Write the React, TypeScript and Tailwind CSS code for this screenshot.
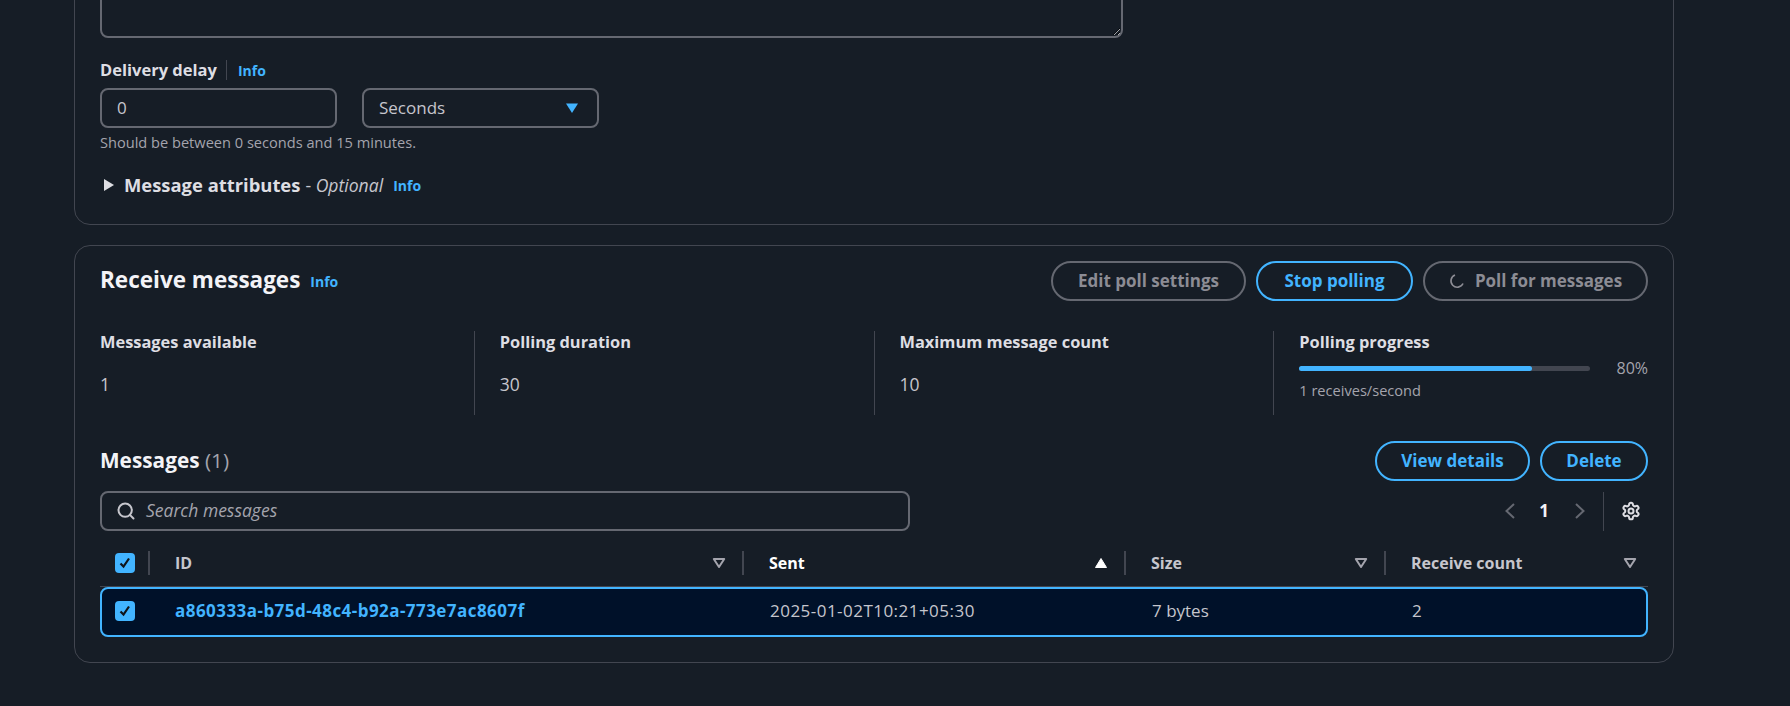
import { Search } from "lucide-react";

const Info = ({ className = "" }: { className?: string }) => (
  <span className={`text-[14px] leading-4 font-bold text-[#42b4ff] ${className}`}>Info</span>
);

const SortDown = () => (
  <svg width="14" height="12" viewBox="0 0 14 12" className="shrink-0">
    <path d="M1.8 2h10.4L7 10z" fill="none" stroke="#a4a4ad" strokeWidth="2" strokeLinejoin="round" />
  </svg>
);

const SortUp = () => (
  <svg width="14" height="12" viewBox="0 0 14 12" className="shrink-0">
    <path d="M1.5 10.5h11L7 1.5z" fill="#ffffff" stroke="#ffffff" strokeWidth="1" strokeLinejoin="round" />
  </svg>
);

const Check = () => (
  <span className="flex h-[20px] w-[20px] items-center justify-center rounded-[4px] bg-[#42b4ff]">
    <svg width="14" height="14" viewBox="0 0 14 14">
      <path d="M2.5 7.5 5.5 10.5 11 2.5" fill="none" stroke="#0f141a" strokeWidth="2.2" />
    </svg>
  </span>
);

const Stat = ({ label, value }: { label: string; value: string }) => (
  <div className="mr-[25px] h-[84px] w-[375px] border-r border-[#424650]">
    <div className="mt-[1px] text-[16.4px] leading-5 font-bold text-[#dedee3]">{label}</div>
    <div className="mt-[22px] text-[17.5px] leading-5 text-[#c6c6cd]">{value}</div>
  </div>
);

const Pill = ({ children, tone, className }: { children: React.ReactNode; tone: "blue" | "off"; className: string }) => (
  <span
    className={`flex h-[40px] items-center justify-center rounded-[20px] border-2 text-[17px] font-bold ${
      tone === "blue" ? "border-[#42b4ff] text-[#42b4ff]" : "border-[#656871] text-[#8c8c94]"
    } ${className}`}
  >
    {children}
  </span>
);

const Head = ({ label, width, strong, up, noRule, pr = "pr-[15px]" }: { label: string; width: string; strong?: boolean; up?: boolean; noRule?: boolean; pr?: string }) => (
  <div className={`flex h-[24px] items-center ${width} pl-[25px] ${pr} ${noRule ? "" : "border-r-2 border-[#424650]"}`}>
    <span className={`flex-1 text-[16px] font-bold ${strong ? "text-white" : "text-[#c6c6cd]"}`}>{label}</span>
    {up ? <SortUp /> : <SortDown />}
  </div>
);

export default function App() {
  return (
    <div
      className="h-[706px] w-[1790px] overflow-hidden bg-[#161d26] px-[74px]"
      style={{ fontFamily: '"Open Sans", "Noto Sans", sans-serif' }}
    >
      <div className="-mt-[60px] flex w-[1600px] flex-col gap-[20px]">
        <section className="h-[285px] rounded-[16px] border border-[#424650] px-[25px] pt-[5px]">
          <textarea
            readOnly
            className="block h-[92px] w-[1023px] resize-y rounded-[8px] border-2 border-[#656871] bg-transparent"
          />
          <div className="mt-[20px] flex h-[24px] items-center">
            <span className="text-[16.5px] font-bold text-[#dedee3]">Delivery delay</span>
            <span className="ml-[9px] mr-[11px] h-[20px] w-px bg-[#424650]" />
            <Info className="mt-[2px]" />
          </div>
          <div className="mt-[6px] flex gap-[25px]">
            <div className="flex h-[40px] w-[237px] items-center rounded-[8px] border-2 border-[#656871] pl-[15px] text-[17px] text-[#c6c6cd]">
              0
            </div>
            <div className="flex h-[40px] w-[237px] items-center justify-between rounded-[8px] border-2 border-[#656871] pb-[1px] pl-[15px] pr-[18px] text-[17px] text-[#c6c6cd]">
              Seconds
              <svg width="14" height="12" viewBox="0 0 14 12">
                <path d="M1 1.5h12L7 11z" fill="#42b4ff" />
              </svg>
            </div>
          </div>
          <div className="mt-[4px] text-[14.6px] leading-5 text-[#a4a4ad]">Should be between 0 seconds and 15 minutes.</div>
          <div className="mt-[21px] flex h-[24px] items-center">
            <svg width="12" height="14" viewBox="0 0 12 14" className="ml-[3px] mr-[9px]">
              <path d="M1 1v12l10-6z" fill="#dedee3" />
            </svg>
            <span className="text-[18.4px] font-bold text-[#dedee3]">Message attributes</span>
            <span className="ml-[5px] text-[17.6px] text-[#c6c6cd]">
              - <i>Optional</i>
            </span>
            <Info className="ml-[10px] mt-[2px]" />
          </div>
        </section>

        <section className="h-[418px] rounded-[16px] border border-[#424650] px-[25px] pt-[15px]">
          <div className="flex items-center justify-between">
            <div className="flex items-center gap-[10px]">
              <h2 className="-mt-[2px] text-[22.5px] leading-[30px] font-bold text-[#f3f3f7]">Receive messages</h2>
              <Info className="mt-[2px]" />
            </div>
            <div className="flex gap-[10px]">
              <Pill tone="off" className="w-[195px] pb-[1px]">Edit poll settings</Pill>
              <Pill tone="blue" className="w-[157px] pb-[1px]">Stop polling</Pill>
              <Pill tone="off" className="w-[225px] gap-[10px] pb-[1px]">
                <svg width="16" height="16" viewBox="0 0 16 16">
                  <path d="M6 2a6.3 6.3 0 1 0 8 8.5" fill="none" stroke="#8c8c94" strokeWidth="1.6" />
                </svg>
                Poll for messages
              </Pill>
            </div>
          </div>

          <div className="mt-[30px] flex">
            <Stat label="Messages available" value="1" />
            <Stat label="Polling duration" value="30" />
            <Stat label="Maximum message count" value="10" />
            <div className="w-[349px]">
              <div className="mt-[1px] text-[16.4px] leading-5 font-bold text-[#dedee3]">Polling progress</div>
              <div className="mt-[6px] flex items-center justify-between">
                <div className="h-[5px] w-[291px] rounded-full bg-[#424650]">
                  <div className="h-[5px] rounded-full bg-[#42b4ff]" style={{ width: "80%" }} />
                </div>
                <span className="text-[16px] leading-5 text-[#a4a4ad]">80%</span>
              </div>
              <div className="mt-[2px] text-[14.6px] leading-5 text-[#a4a4ad]">1 receives/second</div>
            </div>
          </div>

          <div className="mt-[26px] flex items-center justify-between">
            <div className="pb-[1px] text-[20.8px] font-bold text-[#f3f3f7]">
              Messages <span className="font-normal text-[#a4a4ad]">(1)</span>
            </div>
            <div className="flex gap-[10px]">
              <Pill tone="blue" className="w-[155px] pb-[1px]">View details</Pill>
              <Pill tone="blue" className="w-[108px] pb-[1px]">Delete</Pill>
            </div>
          </div>

          <div className="mt-[10px] flex h-[40px] items-center justify-between">
            <div className="flex h-[40px] w-[810px] items-center gap-[10px] rounded-[8px] border-2 border-[#656871] pl-[14px] text-[#a4a4ad]">
              <Search size={20} strokeWidth={2.4} color="#c6c6cd" />
              <i className="pb-[1px] text-[17.5px]">Search messages</i>
            </div>
            <div className="flex items-center">
              <svg width="12" height="16" viewBox="0 0 12 16">
                <path d="M10 1 2.5 8l7.5 7" fill="none" stroke="#656871" strokeWidth="2" />
              </svg>
              <span className="ml-[23px] mr-[25px] text-[17px] font-bold text-[#f3f3f7]">1</span>
              <svg width="12" height="16" viewBox="0 0 12 16">
                <path d="M2 1l7.5 7L2 15" fill="none" stroke="#656871" strokeWidth="2" />
              </svg>
              <span className="ml-[17px] h-[39px] w-px bg-[#424650]" />
              <svg width="20" height="20" viewBox="0 0 24 24" fill="none" stroke="#dedee3" strokeWidth="2.4" strokeLinecap="round" strokeLinejoin="round" className="ml-[17px] mr-[7px]">
                <path d="M12.22 2h-.44a2 2 0 0 0-2 2v.18a2 2 0 0 1-1 1.73l-.43.25a2 2 0 0 1-2 0l-.15-.08a2 2 0 0 0-2.73.73l-.22.38a2 2 0 0 0 .73 2.73l.15.1a2 2 0 0 1 1 1.72v.51a2 2 0 0 1-1 1.74l-.15.09a2 2 0 0 0-.73 2.73l.22.38a2 2 0 0 0 2.73.73l.15-.08a2 2 0 0 1 2 0l.43.25a2 2 0 0 1 1 1.73V20a2 2 0 0 0 2 2h.44a2 2 0 0 0 2-2v-.18a2 2 0 0 1 1-1.73l.43-.25a2 2 0 0 1 2 0l.15.08a2 2 0 0 0 2.73-.73l.22-.39a2 2 0 0 0-.73-2.73l-.15-.08a2 2 0 0 1-1-1.74v-.5a2 2 0 0 1 1-1.74l.15-.09a2 2 0 0 0 .73-2.73l-.22-.38a2 2 0 0 0-2.73-.73l-.15.08a2 2 0 0 1-2 0l-.43-.25a2 2 0 0 1-1-1.73V4a2 2 0 0 0-2-2z" />
                <circle cx="12" cy="12" r="3" />
              </svg>
            </div>
          </div>

          <div className="mt-[20px] flex h-[36px] items-start border-b border-[#424650]">
            <div className="flex h-[24px] w-[50px] items-center border-r-2 border-[#424650] pl-[15px]">
              <Check />
            </div>
            <Head label="ID" width="w-[594px]" pr="pr-[16px]" />
            <Head label="Sent" width="w-[382px]" strong up pr="pr-[16px]" />
            <Head label="Size" width="w-[260px]" pr="pr-[16px]" />
            <Head label="Receive count" width="w-[262px]" noRule pr="pr-[11px]" />
          </div>
          <div className="flex h-[50px] items-center rounded-[8px] border-2 border-[#42b4ff] bg-[#001129] pb-[2px] text-[17px] text-[#c6c6cd]">
            <div className="w-[73px] pl-[13px]"><Check /></div>
            <div className="w-[595px] text-[17px] font-bold tracking-[0.45px] text-[#42b4ff]">a860333a-b75d-48c4-b92a-773e7ac8607f</div>
            <div className="w-[382px] tracking-[0.47px]">2025-01-02T10:21+05:30</div>
            <div className="w-[260px]">7 bytes</div>
            <div>2</div>
          </div>
        </section>
      </div>
    </div>
  );
}
